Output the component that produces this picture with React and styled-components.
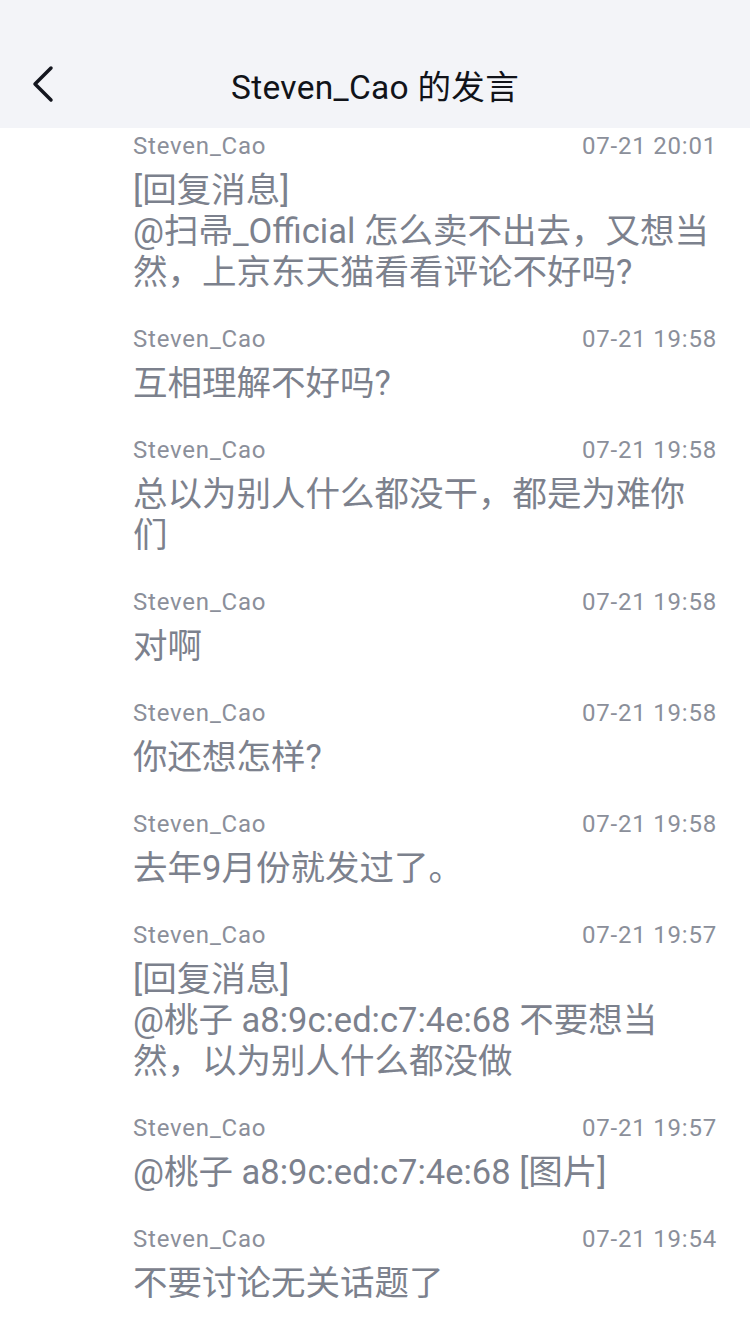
import styled, { createGlobalStyle } from "styled-components";

const GlobalStyle = createGlobalStyle`
  body {
    margin: 0;
    background: #ffffff;
    font-family: Roboto, "Noto Sans CJK SC", sans-serif;
  }
`;

const Page = styled.div`
  width: 750px;
  min-height: 1334px;
  background: #ffffff;
`;

const Header = styled.header`
  height: 128px;
  box-sizing: border-box;
  padding-top: 40px;
  background: #f3f4f8;
  display: flex;
  align-items: center;
  justify-content: center;
  position: relative;
`;

const BackButton = styled.button`
  position: absolute;
  left: 24px;
  top: 58px;
  width: 48px;
  height: 52px;
  border: none;
  background: transparent;
  padding: 0;
  display: flex;
  align-items: center;
  justify-content: center;
`;

const Title = styled.h1`
  margin: 0;
  height: 88px;
  display: flex;
  align-items: center;
  font-size: 33.5px;
  font-weight: 400;
  letter-spacing: 0.3px;
  color: #111319;
  font-family: Roboto, "Noto Sans CJK SC", sans-serif;
`;

const List = styled.div`
  display: flex;
  flex-direction: column;
`;

const Item = styled.div`
  padding: 3px 33px 28px 133px;
`;

const Meta = styled.div`
  display: flex;
  justify-content: space-between;
  align-items: center;
  height: 30px;
  font-size: 24px;
  letter-spacing: 0.8px;
  color: #8b8f9a;
  font-family: Roboto, "Noto Sans CJK SC", sans-serif;
  margin-bottom: 9px;
`;

const Content = styled.div`
  font-size: 34.5px;
  line-height: 41px;
  color: #7c818d;
  font-family: Roboto, "Noto Sans CJK SC", sans-serif;
  word-break: break-all;
`;

const messages = [
  { time: "07-21 20:01", lines: ["[回复消息]", "@扫帚_Official 怎么卖不出去，又想当然，上京东天猫看看评论不好吗?"] },
  { time: "07-21 19:58", lines: ["互相理解不好吗?"] },
  { time: "07-21 19:58", lines: ["总以为别人什么都没干，都是为难你们"] },
  { time: "07-21 19:58", lines: ["对啊"] },
  { time: "07-21 19:58", lines: ["你还想怎样?"] },
  { time: "07-21 19:58", lines: ["去年9月份就发过了。"] },
  { time: "07-21 19:57", lines: ["[回复消息]", "@桃子 a8:9c:ed:c7:4e:68 不要想当然，以为别人什么都没做"] },
  { time: "07-21 19:57", lines: ["@桃子 a8:9c:ed:c7:4e:68 [图片]"] },
  { time: "07-21 19:54", lines: ["不要讨论无关话题了"] },
];

export default function App() {
  return (
    <Page>
      <GlobalStyle />
      <Header>
        <BackButton aria-label="back">
          <svg width="48" height="52" viewBox="0 0 48 52">
            <path
              d="M27 10 L11 26 L27 42"
              fill="none"
              stroke="#14161f"
              strokeWidth="3.5"
              strokeLinecap="round"
              strokeLinejoin="round"
            />
          </svg>
        </BackButton>
        <Title>Steven_Cao 的发言</Title>
      </Header>
      <List>
        {messages.map((m, i) => (
          <Item key={i}>
            <Meta>
              <span>Steven_Cao</span>
              <span>{m.time}</span>
            </Meta>
            <Content>
              {m.lines.map((l, j) => (
                <span key={j}>
                  {j > 0 && <br />}
                  {l}
                </span>
              ))}
            </Content>
          </Item>
        ))}
      </List>
    </Page>
  );
}
